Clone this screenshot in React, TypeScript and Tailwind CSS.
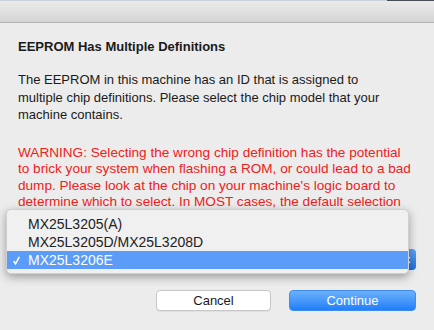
import React from 'react';

const chips = ['MX25L3205(A)', 'MX25L3205D/MX25L3208D', 'MX25L3206E'];

const warningLines = [
  'WARNING: Selecting the wrong chip definition has the potential',
  'to brick your system when flashing a ROM, or could lead to a bad',
  "dump. Please look at the chip on your machine's logic board to",
  'determine which to select. In MOST cases, the default selection',
];

export default function App() {
  const selected = 2;

  return (
    <div
      className="relative w-[434px] h-[330px] overflow-hidden bg-[#ececec] text-[13px] text-[#1a1a1a]"
      style={{ fontFamily: '"Liberation Sans", Arial, sans-serif' }}
    >
      {/* desktop strip behind the window */}
      <div className="flex h-px">
        <div className="flex-1 bg-[#c9d3dc]" />
        <div className="w-[47px] bg-[#4a4f57]" />
      </div>

      {/* title bar */}
      <div className="h-[22px] bg-gradient-to-b from-[#ebebeb] to-[#d5d5d5] border-b border-[#b3b3b3]" />

      <div className="px-[18px] pt-[16px]">
        <h1 className="font-bold leading-[16px]">EEPROM Has Multiple Definitions</h1>

        <p className="mt-[16px] leading-[17.5px] whitespace-nowrap">
          The EEPROM in this machine has an ID that is assigned to
          <br />
          multiple chip definitions. Please select the chip model that your
          <br />
          machine contains.
        </p>

        <p className="mt-[21px] leading-[16.5px] text-[13.6px] text-[#ee2020] whitespace-nowrap">
          {warningLines.map((line) => (
            <span key={line} className="block">
              {line}
            </span>
          ))}
        </p>

        {/* popup button, mostly covered by the open menu */}
        <div className="mt-[38.5px] flex justify-end">
          <div className="w-[392px] h-[21px] rounded-[4px] bg-white border border-[#c8c8c8] flex justify-end">
            <div className="w-[18px] -m-px rounded-r-[4px] bg-gradient-to-b from-[#5fa4f8] to-[#1f6fe0] flex flex-col items-center justify-center gap-[2px]">
              <svg width="7" height="4" viewBox="0 0 7 4">
                <path d="M0.8 3.4 L3.5 0.8 L6.2 3.4" fill="none" stroke="white" strokeWidth="1.2" />
              </svg>
              <svg width="7" height="4" viewBox="0 0 7 4">
                <path d="M0.8 0.6 L3.5 3.2 L6.2 0.6" fill="none" stroke="white" strokeWidth="1.2" />
              </svg>
            </div>
          </div>
        </div>

        <div className="mt-[20px] flex justify-end gap-[18px]">
          <button className="w-[115px] h-[21px] rounded-[4px] bg-white border border-[#c6c6c6] shadow-[0_1px_0_rgba(0,0,0,0.05)] text-[13px] text-[#1a1a1a]">
            Cancel
          </button>
          <button className="w-[127px] h-[21px] rounded-[4px] bg-gradient-to-b from-[#6bb1fb] to-[#1c7ffa] border border-[#3f8cf0] text-[13px] text-white">
            Continue
          </button>
        </div>
      </div>

      {/* open popup menu */}
      <div className="absolute left-[6px] top-[209px] w-[403px] rounded-[5px] bg-[#f0f0f0] pt-[5px] pb-[4px] shadow-[0_3px_10px_rgba(0,0,0,0.35)] border border-[#d0d0d0]">
        {chips.map((chip, i) => (
          <div
            key={chip}
            className={`flex items-center h-[18px] text-[14px] ${i === selected ? 'bg-[#5a9cf8] text-white' : 'text-[#222]'}`}
          >
            <span className="w-[21px] pl-[6px] flex items-center">
              {i === selected && (
                <svg width="7" height="9" viewBox="0 0 7 9">
                  <path d="M0.7 5 L2.6 7.9 L6.3 0.8" fill="none" stroke="white" strokeWidth="1.5" />
                </svg>
              )}
            </span>
            <span>{chip}</span>
          </div>
        ))}
      </div>
    </div>
  );
}
